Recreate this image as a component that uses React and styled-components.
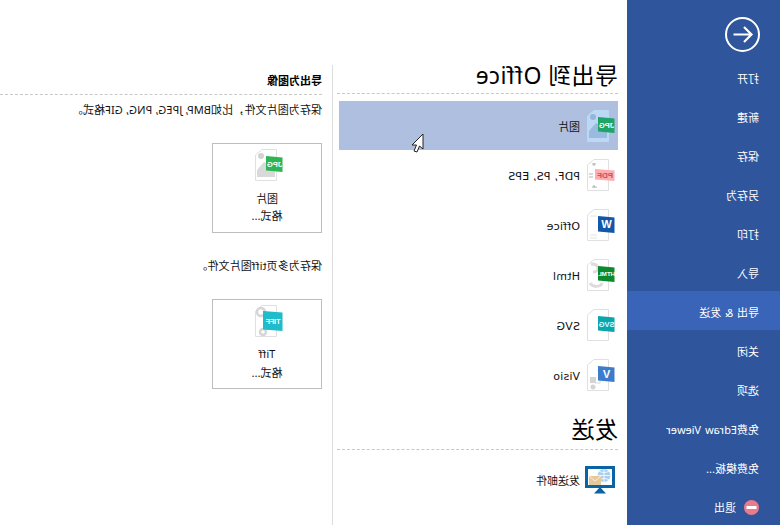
import React from 'react';
import styled, { createGlobalStyle } from 'styled-components';

const GlobalStyle = createGlobalStyle`
    html, body {
        margin: 0;
        padding: 0;
        background: #fff;
    }
    body {
        font-family: "Noto Sans", "Noto Sans CJK SC", sans-serif;
        font-size: 11px;
        color: #111;
    }
`;

// the whole window is horizontally flipped in the picture
const Mirror = styled.div`
    display: flex;
    width: 780px;
    height: 525px;
    overflow: hidden;
    transform: scaleX(-1);
    background: #fff;
`;

const Sidebar = styled.nav`
    display: flex;
    flex-direction: column;
    flex: none;
    width: 153px;
    background: #2f559d;
    color: #fff;
`;

const BackButton = styled.div`
    height: 58px;
    padding: 17px 0 0 20px;
    box-sizing: border-box;
`;

const MenuItem = styled.div`
    display: flex;
    align-items: center;
    gap: 8px;
    flex: none;
    height: 39px;
    padding: 3px 0 0 21px;
    box-sizing: border-box;
    background: ${p => (p.$active ? '#3a64b7' : 'transparent')};
    white-space: nowrap;
    word-spacing: 1px;
`;

const Middle = styled.section`
    flex: none;
    width: 294px;
    padding: 57px 0 0 9px;
    box-sizing: border-box;
`;

const Heading = styled.h2`
    display: flex;
    align-items: center;
    width: 281px;
    height: 37px;
    margin: 0;
    padding-bottom: 3px;
    font-size: 23px;
    font-weight: 400;
    letter-spacing: 0.4px;
    color: #000;
    border-bottom: 1px dashed #c8c8c8;
    box-sizing: border-box;
`;

const RowList = styled.div`
    display: flex;
    flex-direction: column;
    margin-top: ${p => p.$top}px;
`;

const Row = styled.div`
    position: relative;
    display: flex;
    align-items: center;
    gap: 3px;
    width: 279px;
    height: ${p => (p.$selected ? 49 : 50)}px;
    padding-left: 3px;
    box-sizing: border-box;
    font-family: "DejaVu Sans", "Noto Sans CJK SC", sans-serif;
    background: ${p => (p.$selected ? '#afbfdf' : 'transparent')};
`;

const FormatLabel = styled.span`
    padding-top: 2px;
    letter-spacing: 0.2px;
`;

const Cursor = styled.svg`
    position: absolute;
    left: 194px;
    top: 32px;
`;

const SendHeading = styled(Heading)`
    margin-top: 1px;
    height: 49px;
    padding-top: 8px;
`;

const Right = styled.section`
    flex: 1;
    margin-top: 65px;
    padding-left: 10px;
    border-left: 1px solid #dcdcdc;
`;

const SubHeading = styled.h3`
    display: flex;
    align-items: center;
    height: 30px;
    margin: 0;
    font-size: 11px;
    font-weight: 700;
    color: #000;
    border-bottom: 1px dashed #c8c8c8;
    box-sizing: border-box;
`;

const Desc = styled.p`
    height: 16px;
    margin: ${p => p.$top}px 0 0;
    line-height: 16px;
    letter-spacing: 0.1px;
    white-space: nowrap;
`;

const FormatBox = styled.div`
    display: flex;
    flex-direction: column;
    align-items: center;
    width: 110px;
    height: 90px;
    margin-top: ${p => p.$top}px;
    padding-top: 4px;
    border: 1px solid #bdbdbd;
    box-sizing: border-box;
    text-align: center;
`;

const BoxLabel = styled.div`
    margin-top: ${p => p.$top}px;
    line-height: 16px;
`;

const FILE_TAGS = {
    JPG: { bg: '#2cb552', fg: '#fff', x: 17, top: 8, bottom: 24, size: 7.5 },
    PDF: { bg: '#ffadb0', fg: '#c0575c', x: 20, top: 11, bottom: 23, size: 8 },
    W: { bg: '#1257a8', fg: '#fff', x: 17, top: 8, bottom: 25, size: 11 },
    HTML: { bg: '#0a8a2c', fg: '#fff', x: 17, top: 8, bottom: 24, size: 6.2 },
    SVG: { bg: '#0aa5ad', fg: '#dff', x: 17, top: 8, bottom: 24, size: 7.5 },
    V: { bg: '#3d7ccb', fg: '#fff', x: 17, top: 8, bottom: 24, size: 11 },
    TIFF: { bg: '#1fbccb', fg: '#fff', x: 20, top: 7, bottom: 27, size: 7 },
};

// grey drawing on the page, differs per file type
const PageGlyph = ({ tag, color }) => {
    if (tag === 'JPG') {
        return (
            <>
                <circle cx="22" cy="8" r="3" fill={color} />
                <path d="M8 29V20L19 14L26 22V29Z" fill={color} opacity="0.85" />
            </>
        );
    }
    if (tag === 'PDF') {
        return <path d="M19 6H23M21 5V8M18 29H23M21 27V30M22 16H26M22 19H26" stroke="#b5b5b5" strokeWidth="1.2" fill="none" />;
    }
    if (tag === 'W') {
        return <path d="M18 8H25M18 27H25M18 30H25" stroke="#e4e4e4" fill="none" />;
    }
    if (tag === 'HTML') {
        return <path d="M24 6C15 6 15 14 22 14M25 25C22 30 14 29 13 25" stroke="#dcdcdc" strokeWidth="3" fill="none" />;
    }
    if (tag === 'V') {
        return (
            <>
                <path d="M15 9L12 13H18Z" fill="#d8d8d8" />
                <path d="M15 13V25H20" stroke="#d8d8d8" fill="none" />
                <rect x="19" y="19" width="6" height="6" fill="#d4d4d4" />
                <circle cx="22" cy="29" r="2.5" fill="#d4d4d4" />
            </>
        );
    }
    if (tag === 'TIFF') {
        return (
            <>
                <circle cx="22" cy="8" r="4" fill="none" stroke="#d5d5d5" strokeWidth="2.5" />
                <circle cx="20" cy="28" r="3" fill="none" stroke="#d5d5d5" strokeWidth="2.5" />
            </>
        );
    }
    return null;
};

// page with a coloured flag on its left edge
const FileIcon = ({ tag, pageFill = '#fff', pageStroke = '#e0e0e0', tagFill, glyph = '#d2d2d2' }) => {
    const t = FILE_TAGS[tag];
    return (
        <svg width="32" height="34" viewBox="0 0 32 34" style={{ flex: 'none' }}>
            <path d="M6.5 1.5H21L27.5 7V32.5H6.5Z" fill={pageFill} stroke={pageStroke} />
            <PageGlyph tag={tag} color={glyph} />
            <path d={`M0.5 ${t.top + 1.5} L${t.x} ${t.top} V${t.bottom - 1.5} L0.5 ${t.bottom}Z`} fill={tagFill || t.bg} />
            <text
                x={t.x / 2}
                y={(t.top + t.bottom) / 2 + t.size * 0.36}
                textAnchor="middle"
                fontSize={t.size}
                fontWeight="700"
                fontFamily="Liberation Sans, sans-serif"
                fill={t.fg}
            >
                {tag}
            </text>
        </svg>
    );
};

const MailIcon = () => (
    <svg width="32" height="28" viewBox="0 0 32 28" style={{ flex: 'none' }}>
        <path d="M1.5 1.5H28.5V20.5H1.5Z" fill="#fff" stroke="#0a64a4" strokeWidth="3" />
        <path d="M9 27.5 L15 21 L21 27.5Z" fill="#0a64a4" />
        <circle cx="11" cy="9.5" r="6.5" fill="#a9d0f0" />
        <path d="M4.5 9.5H17.5M11 3V16M6 5C9 7 13 7 16 5M6 14C9 12 13 12 16 14" stroke="#fff" strokeWidth="0.8" fill="none" />
        <path d="M14 10H26V19H14Z" fill="#e8c89a" />
        <path d="M14 10L20 15L26 10" stroke="#f7ecd9" fill="none" />
    </svg>
);

const formats = [
    { label: 'PDF, PS, EPS', tag: 'PDF' },
    { label: 'Office', tag: 'W' },
    { label: 'Html', tag: 'HTML' },
    { label: 'SVG', tag: 'SVG' },
    { label: 'Visio', tag: 'V' },
];

const menu = ['打开', '新建', '保存', '另存为', '打印', '导入', '导出 & 发送', '关闭', '选项', '免费Edraw Viewer', '免费模板...'];

const App = () => {
    return (
        <>
            <GlobalStyle />
            <Mirror>
                <Sidebar>
                    <BackButton>
                        <svg width="35" height="35" viewBox="0 0 35 35" fill="none" stroke="#fff">
                            <circle cx="17.5" cy="17.5" r="16.5" strokeWidth="2" />
                            <path d="M8.5 17.5H26.5M16 10L8.5 17.5L16 25" strokeWidth="2.2" />
                        </svg>
                    </BackButton>
                    {menu.map(item => (
                        <MenuItem key={item} $active={item.startsWith('导出')}>{item}</MenuItem>
                    ))}
                    <MenuItem>
                        <svg width="15" height="15" viewBox="0 0 15 15">
                            <circle cx="7.5" cy="7.5" r="7.5" fill="#e87c8c" />
                            <rect x="2.5" y="6" width="10" height="3" fill="#fff" />
                        </svg>
                        退出
                    </MenuItem>
                </Sidebar>

                <Middle>
                    <Heading>导出到 Office</Heading>
                    <RowList $top={7}>
                        <Row $selected>
                            <FileIcon tag="JPG" pageFill="#bcd8f4" pageStroke="#bcd8f4" tagFill="#1fa46a" glyph="#93b6da" />
                            图片
                            <Cursor width="14" height="21" viewBox="0 0 14 21">
                                <path d="M1 1V16L4.5 13L7 19L10 18L7.5 12H12Z" fill="#fff" stroke="#222" />
                            </Cursor>
                        </Row>
                        {formats.map(f => (
                            <Row key={f.tag}>
                                <FileIcon tag={f.tag} />
                                <FormatLabel>{f.label}</FormatLabel>
                            </Row>
                        ))}
                    </RowList>
                    <SendHeading>发送</SendHeading>
                    <RowList $top={5}>
                        <Row>
                            <MailIcon />
                            发送邮件
                        </Row>
                    </RowList>
                </Middle>

                <Right>
                    <SubHeading>导出为图像</SubHeading>
                    <Desc $top={7}>保存为图片文件，比如BMP, JPEG, PNG, GIF格式。</Desc>
                    <FormatBox $top={25}>
                        <FileIcon tag="JPG" />
                        <BoxLabel $top={9}>图片</BoxLabel>
                        <BoxLabel $top={1}>格式...</BoxLabel>
                    </FormatBox>
                    <Desc $top={25}>保存为多页tiff图片文件。</Desc>
                    <FormatBox $top={25}>
                        <FileIcon tag="TIFF" />
                        <BoxLabel $top={8}>Tiff</BoxLabel>
                        <BoxLabel $top={3}>格式...</BoxLabel>
                    </FormatBox>
                </Right>
            </Mirror>
        </>
    );
};

export default App;
